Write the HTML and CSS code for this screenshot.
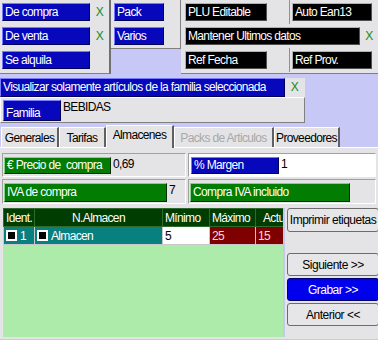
FILE: index.html
```html
<!DOCTYPE html>
<html lang="es">
  <head>
    <meta charset="UTF-8" />
    <title>Articulo</title>
    <link rel="stylesheet" href="styles.css">
  </head>
  <body>
    <div class="top">
      <div class="panel pa">
        <div class="row"><span class="lbl blue w88">De compra</span><span class="chk">X</span></div>
        <div class="row"><span class="lbl blue w88">De venta</span><span class="chk">X</span></div>
        <div class="row"><span class="lbl blue w88">Se alquila</span><span class="chk"></span></div>
      </div>
      <div class="panel pb">
        <div class="row"><span class="lbl blue w50">Pack</span></div>
        <div class="row"><span class="lbl blue w50">Varios</span></div>
      </div>
      <div class="panel pc">
        <div class="row">
          <span class="lbl black w82">PLU Editable</span>
          <span class="sep"></span>
          <span class="lbl black w80">Auto Ean13</span>
        </div>
        <div class="row"><span class="lbl black w183">Mantener Ultimos datos</span><span class="chk">X</span></div>
        <div class="row">
          <span class="lbl black w82">Ref Fecha</span>
          <span class="sep"></span>
          <span class="lbl black w80">Ref Prov.</span>
        </div>
      </div>
    </div>

    <div class="vis">
      <span class="lbl blue w285">Visualizar solamente artículos de la familia seleccionada</span><span class="chk">X</span>
    </div>
    <div class="fam">
      <span class="lbl blue fam-lbl">Familia</span>
      <span class="fam-val">BEBIDAS</span>
    </div>

    <div class="tabs">
      <span class="tab t1">Generales</span>
      <span class="tab t2">Tarifas</span>
      <span class="tab t3 active">Almacenes</span>
      <span class="tab t4 disabled">Packs de Articulos</span>
      <span class="tab t5">Proveedores</span>
    </div>

    <div class="page">
      <div class="fields">
        <div class="fcol">
          <div class="frow"><span class="lbl green w107">€ Precio de&nbsp; compra</span><span class="val">0,69</span></div>
          <div class="frow"><span class="lbl green w163">IVA de compra</span><span class="val">7</span></div>
        </div>
        <div class="fcol right">
          <div class="frow white"><span class="lbl blue w88">% Margen</span><span class="val">1</span></div>
          <div class="frow"><span class="lbl green w160">Compra IVA incluido</span></div>
        </div>
      </div>

      <div class="lower">
        <div class="grid">
          <table>
            <tr class="head">
              <th class="c1">Ident.</th>
              <th class="c2 center">N.Almacen</th>
              <th class="c3">Mínimo</th>
              <th class="c4">Máximo</th>
              <th class="c5">Actual</th>
            </tr>
            <tr class="data">
              <td class="teal"><span class="box"></span>1</td>
              <td class="teal"><span class="box"></span>Almacen</td>
              <td class="whitecell">5</td>
              <td class="red">25</td>
              <td class="red">15</td>
            </tr>
          </table>
        </div>
        <div class="btns">
          <button class="btn print">Imprimir etiquetas</button>
          <div class="nav">
            <button class="btn">Siguiente &gt;&gt;</button>
            <button class="btn primary">Grabar &gt;&gt;</button>
            <button class="btn">Anterior &lt;&lt;</button>
          </div>
        </div>
      </div>
    </div>
  </body>
</html>
```

FILE: styles.css
```css
* {
  margin: 0;
  padding: 0;
  box-sizing: border-box;
}

body {
  width: 378px;
  height: 340px;
  overflow: hidden;
  background-color: #c8c8f6;
  font-family: "Liberation Sans", Arial, sans-serif;
  font-size: 12px;
  letter-spacing: -0.65px;
  color: #000;
}

.top {
  display: flex;
  align-items: flex-start;
  height: 78px;
}

.panel {
  background-color: #e4e3e6;
  border-right: 1px solid #808080;
  border-bottom: 1px solid #808080;
  padding: 3px 0 0 2px;
  display: flex;
  flex-direction: column;
  gap: 6px;
}

.pa {
  width: 111px;
  height: 74px;
  border-right: 2px solid #707070;
}
.pb {
  width: 70px;
  height: 49px;
  padding-left: 3px;
}
.pc {
  width: 197px;
  height: 74px;
  border-right: none;
  padding-left: 4px;
}

.row {
  display: flex;
  height: 18px;
}

.lbl {
  display: block;
  height: 18px;
  line-height: 16px;
  padding-left: 2px;
  white-space: nowrap;
  overflow: hidden;
  border: 1px solid;
}

.blue {
  background-color: #0707bb;
  color: #fff;
  border-color: #7a7aff #00005a #00005a #7a7aff;
}
.black {
  background-color: #000;
  color: #fff;
  border-color: #b0b0b0 #505050 #505050 #b0b0b0;
}
.green {
  background-color: #037c03;
  color: #fff;
  border-color: #8ad08a #003000 #003000 #8ad08a;
}

.w50 { width: 50px; }
.w80 { width: 80px; }
.w82 { width: 82px; }
.w88 { width: 88px; }
.w107 { width: 107px; }
.w160 { width: 160px; }
.w163 { width: 163px; }
.w183 { width: 183px; }
.w285 { width: 285px; }

.chk {
  display: block;
  width: 19px;
  height: 18px;
  line-height: 18px;
  text-align: center;
  color: #1a8a1a;
  font-size: 12px;
  font-weight: 300;
}

.sep {
  display: block;
  width: 23px;
  border-right: 1px solid #909090;
  margin-right: 2px;
  margin-top: -3px;
  height: 24px;
}

.vis {
  display: flex;
  width: 305px;
  height: 19px;
  background-color: #e4e3e6;
}
.vis .lbl {
  height: 19px;
  line-height: 17px;
}

.fam {
  display: flex;
  width: 305px;
  height: 26px;
  padding: 2px 0 0 2px;
  background-color: #e4e3e6;
  border: 1px solid;
  border-color: #fff #808080 #808080 #fff;
}
.fam-lbl {
  width: 58px;
  height: 21px;
  line-height: 24px;
}
.fam-val {
  padding-left: 2px;
  line-height: 14px;
}

.tabs {
  display: flex;
  align-items: flex-end;
  height: 24px;
  padding-left: 1px;
}

.tab {
  display: block;
  height: 20px;
  line-height: 20px;
  text-align: center;
  background-color: #e4e3e6;
  border-top: 1px solid #fff;
  border-left: 1px solid #fff;
  border-right: 2px solid #606060;
}
.t1 { width: 58px; }
.t2 { width: 47px; }
.t3 { width: 68px; }
.t4 { width: 100px; }
.t5 { width: 66px; }

.tab.active {
  height: 23px;
  line-height: 18px;
  margin-bottom: -1px;
  position: relative;
}
.tab.disabled {
  color: #a8a8a8;
}

.page {
  height: 192px;
  background-color: #e4e3e6;
  border-top: 1px solid #fff;
  padding: 5px 0 0 2px;
}

.fields {
  display: flex;
  gap: 2px;
}

.fcol {
  width: 184px;
  display: flex;
  flex-direction: column;
  gap: 2px;
}
.fcol.right {
  width: 188px;
}

.frow {
  display: flex;
  height: 24px;
  padding: 3px 0 0 1px;
  border: 1px solid;
  border-color: #a0a0a0 #fff #fff #a0a0a0;
}
.frow.white {
  background-color: #fff;
  padding-left: 2px;
}
.frow .lbl {
  height: 17px;
  line-height: 15px;
}
.frow + .frow {
  height: 25px;
  padding-top: 3px;
}
.frow + .frow .lbl {
  height: 19px;
  line-height: 17px;
}

.val {
  padding-left: 2px;
  line-height: 14px;
}

.lower {
  display: flex;
  margin-top: 4px;
}

.grid {
  width: 282px;
  height: 129px;
  margin-left: 1px;
  background-color: #acebaa;
  border-right: 2px solid #c4c8ea;
  overflow: hidden;
}

table {
  border-collapse: collapse;
  table-layout: fixed;
  width: 330px;
}

th,
td {
  height: 18px;
  padding: 0 2px;
  white-space: nowrap;
  overflow: hidden;
  font-weight: normal;
  text-align: left;
}

.head th {
  background-color: #003d00;
  color: #fff;
  border: 1px solid #2f6a2f;
}
.head .center {
  text-align: center;
}
.head .c5 {
  padding-left: 7px;
}
.c1 { width: 31px; }
.c2 { width: 128px; }
.c3 { width: 47px; }
.c4 { width: 46px; }
.c5 { width: 78px; }

.data td {
  border: 1px solid #c8c8c8;
}
.teal {
  background-color: #088080;
  color: #fff;
}
.whitecell {
  background-color: #fff;
}
.red {
  background-color: #7e0000;
  color: #ffd8d8;
  border-color: #e08080;
}

.box {
  display: inline-block;
  width: 11px;
  height: 11px;
  margin-right: 3px;
  vertical-align: -1px;
  background-color: #000;
  border: 2px solid #fff;
}

.btns {
  width: 93px;
  padding-left: 2px;
  display: flex;
  flex-direction: column;
}

.btn {
  display: block;
  width: 92px;
  height: 24px;
  font-family: "Liberation Sans", Arial, sans-serif;
  font-size: 12px;
  letter-spacing: -0.5px;
  color: #000;
  background-color: #e6e5e8;
  border: 1px solid #6c6c6c;
  border-radius: 3px;
}

.nav {
  margin-top: 21px;
  display: flex;
  flex-direction: column;
  gap: 2px;
}
.nav .btn {
  height: 23px;
}
.btn.primary {
  background-color: #0000ec;
  color: #fff;
  border-color: #000070;
}
```
